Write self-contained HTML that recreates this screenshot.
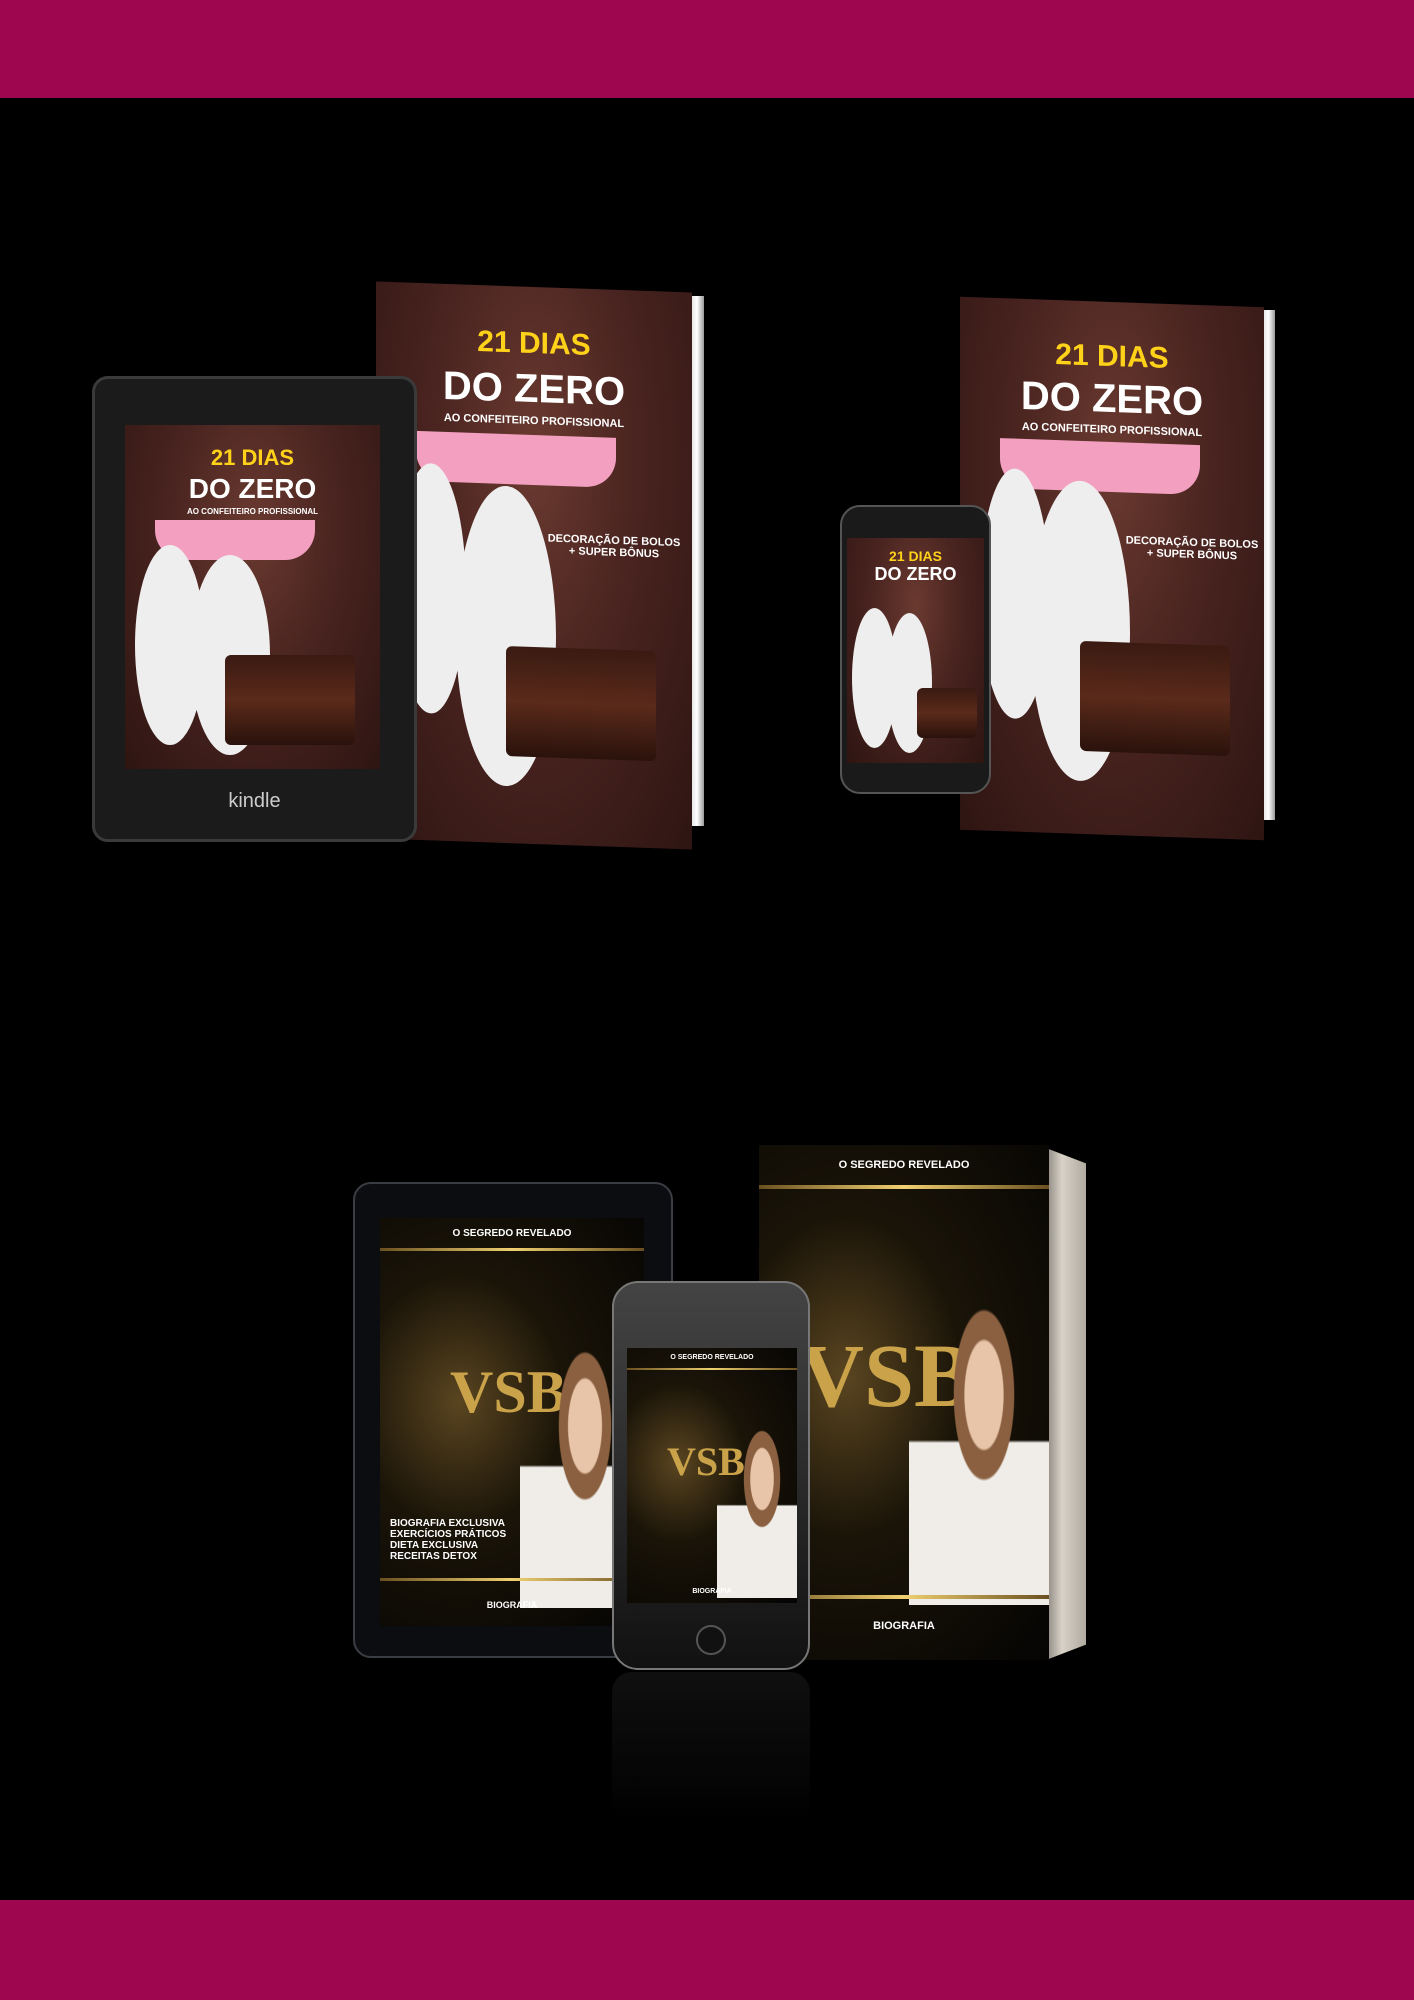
<!DOCTYPE html>
<html><head><meta charset="utf-8"><style>
*{margin:0;padding:0;box-sizing:border-box}
body{width:1414px;height:2000px;background:#000;position:relative;overflow:hidden;font-family:"Liberation Sans",sans-serif}
.bar{position:absolute;left:0;width:1414px;background:#9e0650}
.a{position:absolute}
.choc{background:radial-gradient(ellipse at 50% 30%,#6a3a30 0%,#4a2420 45%,#2e1512 100%);overflow:hidden}
.t1{position:absolute;left:0;right:0;text-align:center;font-weight:bold;color:#ffd21a}
.t2{position:absolute;left:0;right:0;text-align:center;font-weight:bold;color:#fff}
.pink{position:absolute;background:#f3a0c0;border-radius:0 0 30px 30px}
.chef{position:absolute;background:#eee;border-radius:50%}
.cake{position:absolute;background:linear-gradient(#3a1a12,#5a2a1a 50%,#2a120c);border-radius:6px}
.vsb{background:radial-gradient(ellipse at 30% 45%,#5a4520 0%,#1a1408 40%,#050403 100%);overflow:hidden}
.gl{position:absolute;left:0;right:0;height:4px;background:linear-gradient(90deg,#6a5020,#f0d070,#6a5020)}
.big{position:absolute;font-family:"Liberation Serif",serif;color:#c9a24a;font-weight:bold}
.woman{position:absolute;background:radial-gradient(ellipse at 50% 30%,#e8c4a8 0 18%,#8a6040 19% 28%,transparent 29%),linear-gradient(transparent 45%,#f0ede8 46%);}
</style></head><body>
<div class="bar" style="top:0;height:98px"></div>
<div class="bar" style="top:1900px;height:100px"></div>

<!-- Book 1 -->
<div class="a" style="left:690px;top:296px;width:14px;height:530px;background:linear-gradient(90deg,#ddd,#fff,#999)"></div>
<div class="a choc" style="left:376px;top:287px;width:316px;height:557px;transform:skewY(2deg)">
 <div class="t1" style="top:40px;font-size:30px">21 DIAS</div>
 <div class="t2" style="top:80px;font-size:40px">DO ZERO</div>
 <div class="t2" style="top:128px;font-size:11px">AO CONFEITEIRO PROFISSIONAL</div>
 <div class="pink" style="left:40px;top:148px;width:200px;height:50px"></div>
 <div class="t2" style="top:245px;left:160px;font-size:11px">DECORAÇÃO DE BOLOS<br>+ SUPER BÔNUS</div>
 <div class="chef" style="left:20px;top:180px;width:70px;height:250px"></div>
 <div class="chef" style="left:80px;top:200px;width:100px;height:300px"></div>
 <div class="cake" style="left:130px;top:360px;width:150px;height:110px"></div>
</div>
<!-- Kindle -->
<div class="a" style="left:92px;top:376px;width:325px;height:466px;background:#1b1b1b;border-radius:16px;border:3px solid #3a3a3a"></div>
<div class="a choc" style="left:125px;top:425px;width:255px;height:344px">
 <div class="t1" style="top:20px;font-size:22px">21 DIAS</div>
 <div class="t2" style="top:48px;font-size:28px">DO ZERO</div>
 <div class="t2" style="top:82px;font-size:8px">AO CONFEITEIRO PROFISSIONAL</div>
 <div class="pink" style="left:30px;top:95px;width:160px;height:40px"></div>
 <div class="chef" style="left:10px;top:120px;width:70px;height:200px"></div>
 <div class="chef" style="left:65px;top:130px;width:80px;height:200px"></div>
 <div class="cake" style="left:100px;top:230px;width:130px;height:90px"></div>
</div>
<div class="a" style="left:92px;top:790px;width:325px;text-align:center;color:#ccc;font-size:20px">kindle</div>

<!-- Book 2 -->
<div class="a" style="left:1262px;top:310px;width:13px;height:510px;background:linear-gradient(90deg,#ddd,#fff,#999)"></div>
<div class="a choc" style="left:960px;top:302px;width:304px;height:533px;transform:skewY(2deg)">
 <div class="t1" style="top:38px;font-size:30px">21 DIAS</div>
 <div class="t2" style="top:75px;font-size:40px">DO ZERO</div>
 <div class="t2" style="top:122px;font-size:11px">AO CONFEITEIRO PROFISSIONAL</div>
 <div class="pink" style="left:40px;top:140px;width:200px;height:50px"></div>
 <div class="t2" style="top:232px;left:160px;font-size:11px">DECORAÇÃO DE BOLOS<br>+ SUPER BÔNUS</div>
 <div class="chef" style="left:20px;top:170px;width:70px;height:250px"></div>
 <div class="chef" style="left:70px;top:180px;width:100px;height:300px"></div>
 <div class="cake" style="left:120px;top:340px;width:150px;height:110px"></div>
</div>
<!-- Phone 1 -->
<div class="a" style="left:840px;top:505px;width:151px;height:289px;background:#1a1a1a;border-radius:20px;border:2px solid #555"></div>
<div class="a choc" style="left:847px;top:538px;width:137px;height:225px">
 <div class="t1" style="top:10px;font-size:14px">21 DIAS</div>
 <div class="t2" style="top:26px;font-size:18px">DO ZERO</div>
 <div class="chef" style="left:5px;top:70px;width:45px;height:140px"></div>
 <div class="chef" style="left:40px;top:75px;width:45px;height:140px"></div>
 <div class="cake" style="left:70px;top:150px;width:60px;height:50px"></div>
</div>

<!-- Book 3 -->
<div class="a" style="left:1046px;top:1148px;width:40px;height:512px;background:linear-gradient(90deg,#8a857d,#d8d2c8 40%,#b0aaa0);clip-path:polygon(0 0,100% 3%,100% 97%,0 100%)"></div>
<div class="a vsb" style="left:759px;top:1145px;width:290px;height:515px">
 <div class="t2" style="top:14px;font-size:11px">O SEGREDO REVELADO</div>
 <div class="gl" style="top:40px"></div>
 <div class="big" style="left:40px;top:180px;font-size:90px">VSB</div>
 <div class="woman" style="left:150px;top:160px;width:150px;height:300px"></div>
 <div class="gl" style="top:450px"></div>
 <div class="t2" style="top:475px;font-size:11px">BIOGRAFIA</div>
</div>
<!-- Tablet -->
<div class="a" style="left:353px;top:1182px;width:320px;height:476px;background:#0b0d10;border-radius:18px;border:2px solid #3a3e44"></div>
<div class="a vsb" style="left:380px;top:1218px;width:264px;height:408px">
 <div class="t2" style="top:10px;font-size:10px">O SEGREDO REVELADO</div>
 <div class="gl" style="top:30px;height:3px"></div>
 <div class="big" style="left:70px;top:140px;font-size:60px">VSB</div>
 <div class="woman" style="left:140px;top:130px;width:130px;height:260px"></div>
 <div class="t2" style="top:300px;left:10px;right:auto;text-align:left;font-size:10px;line-height:11px">BIOGRAFIA EXCLUSIVA<br>EXERCÍCIOS PRÁTICOS<br>DIETA EXCLUSIVA<br>RECEITAS DETOX</div>
 <div class="gl" style="top:360px;height:3px"></div>
 <div class="t2" style="top:382px;font-size:9px">BIOGRAFIA</div>
</div>
<!-- Phone 2 -->
<div class="a" style="left:612px;top:1281px;width:198px;height:389px;background:linear-gradient(#444,#111);border-radius:26px;border:2px solid #777"></div>
<div class="a vsb" style="left:627px;top:1348px;width:170px;height:255px">
 <div class="t2" style="top:6px;font-size:7px">O SEGREDO REVELADO</div>
 <div class="gl" style="top:20px;height:2px"></div>
 <div class="big" style="left:40px;top:90px;font-size:40px">VSB</div>
 <div class="woman" style="left:90px;top:80px;width:90px;height:170px"></div>
 <div class="t2" style="top:240px;font-size:7px">BIOGRAFIA</div>
</div>
<div class="a" style="left:696px;top:1625px;width:30px;height:30px;border-radius:50%;border:2px solid #555;background:#111"></div>
<div class="a" style="left:612px;top:1672px;width:198px;height:150px;background:linear-gradient(#1a1a1a,#000);opacity:.6;border-radius:20px"></div>
</body></html>
